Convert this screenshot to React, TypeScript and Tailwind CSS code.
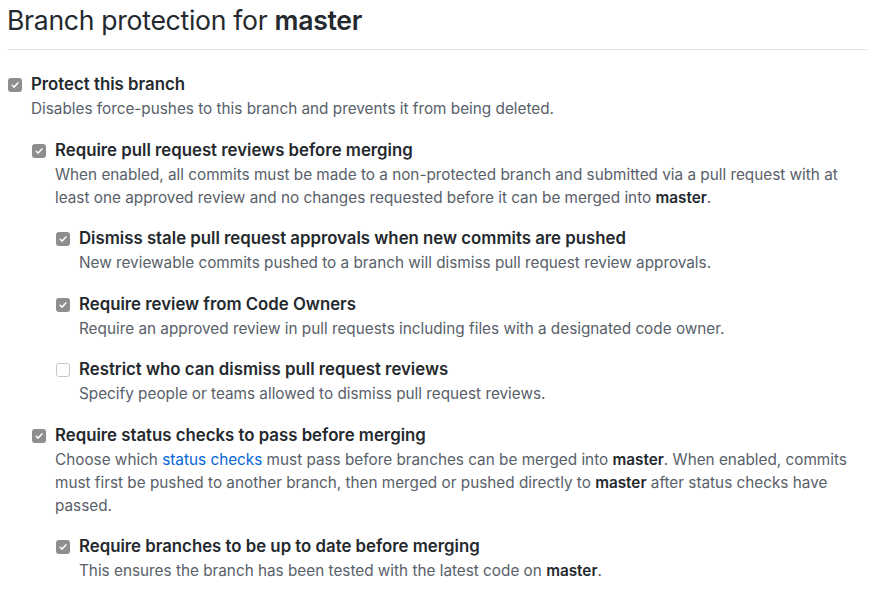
import React from "react";

type Item = {
  label: string;
  checked: boolean;
  desc: React.ReactNode;
  children?: Item[];
};

const M = () => <strong className="font-semibold text-[#24292e]">master</strong>;

const items: Item[] = [
  {
    label: "Protect this branch",
    checked: true,
    desc: <>Disables force-pushes to this branch and prevents it from being deleted.</>,
    children: [
      {
        label: "Require pull request reviews before merging",
        checked: true,
        desc: (
          <>
            When enabled, all commits must be made to a non-protected branch and submitted via a pull request with at
            <br />
            least one approved review and no changes requested before it can be merged into <M />.
          </>
        ),
        children: [
          {
            label: "Dismiss stale pull request approvals when new commits are pushed",
            checked: true,
            desc: <>New reviewable commits pushed to a branch will dismiss pull request review approvals.</>,
          },
          {
            label: "Require review from Code Owners",
            checked: true,
            desc: <>Require an approved review in pull requests including files with a designated code owner.</>,
          },
          {
            label: "Restrict who can dismiss pull request reviews",
            checked: false,
            desc: <>Specify people or teams allowed to dismiss pull request reviews.</>,
          },
        ],
      },
      {
        label: "Require status checks to pass before merging",
        checked: true,
        desc: (
          <>
            Choose which <a className="text-[#0366d6]">status checks</a> must pass before branches can be merged into <M />. When enabled, commits
            <br />
            must first be pushed to another branch, then merged or pushed directly to <M /> after status checks have
            <br />
            passed.
          </>
        ),
        children: [
          {
            label: "Require branches to be up to date before merging",
            checked: true,
            desc: (
              <>
                This ensures the branch has been tested with the latest code on <M />.
              </>
            ),
          },
        ],
      },
    ],
  },
];

function Checkbox({ checked }: { checked: boolean }) {
  if (!checked) {
    return <span className="mt-[6px] block h-[14px] w-[14px] shrink-0 rounded-[3px] border border-[#c6c6c6] bg-white" />;
  }
  return (
    <span className="mt-[6px] flex h-[14px] w-[14px] shrink-0 items-center justify-center rounded-[3px] bg-[#8e8e8e]">
      <svg width="10" height="10" viewBox="0 0 10 10" fill="none">
        <path d="M2.2 5.2 L4.1 7.1 L7.9 2.9" stroke="white" strokeWidth="1.5" strokeLinecap="round" strokeLinejoin="round" />
      </svg>
    </span>
  );
}

function Option({ item }: { item: Item }) {
  return (
    <div>
      <div className="flex gap-[9px]">
        <Checkbox checked={item.checked} />
        <div>
          <div className="text-[16.8px] font-semibold leading-[25px] text-[#24292e]">{item.label}</div>
          <p className="whitespace-nowrap text-[15.3px] leading-[23px] text-[#586069]">{item.desc}</p>
        </div>
      </div>
      {item.children && (
        <div className="ml-[24px] mt-[17.5px] flex flex-col gap-[17.5px]">
          {item.children.map((c) => (
            <Option key={c.label} item={c} />
          ))}
        </div>
      )}
    </div>
  );
}

export default function App() {
  return (
    <div className="min-h-[591px] w-[880px] bg-white px-[7px] pt-[2px]" style={{ fontFamily: "Inter, 'Noto Sans', sans-serif" }}>
      <h1 className="text-[26.6px] font-normal leading-[37px] tracking-[-0.3px] text-[#24292e]">
        Branch protection for <span className="font-semibold">master</span>
      </h1>
      <div className="mt-[10px] w-[860px] border-b border-[#e1e4e8]" />
      <div className="ml-[1px] mt-[22px]">
        {items.map((i) => (
          <Option key={i.label} item={i} />
        ))}
      </div>
    </div>
  );
}
